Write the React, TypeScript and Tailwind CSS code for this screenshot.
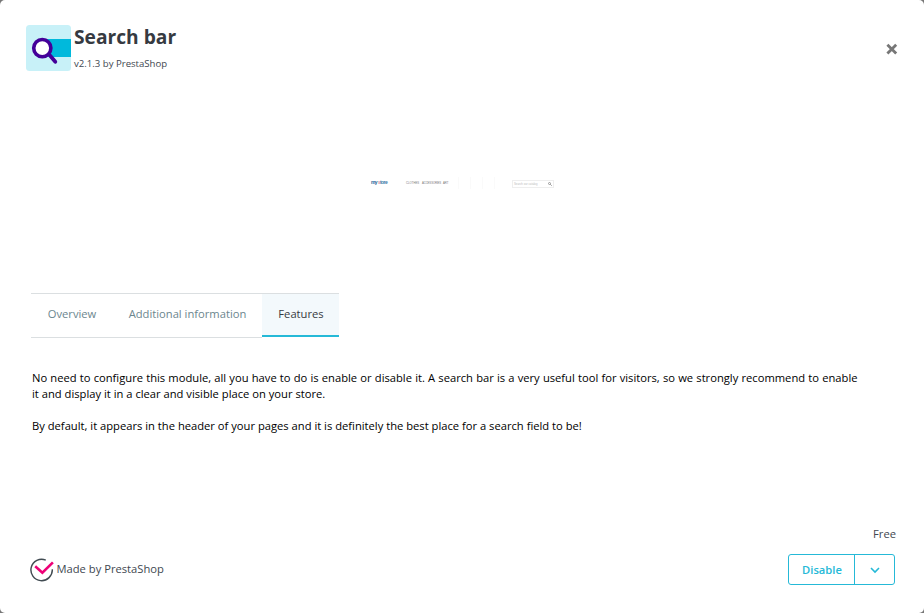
function ModuleIcon() {
  return (
    <svg className="block h-[46px] w-[45px] shrink-0" viewBox="0 0 45 46" fill="none">
      <rect width="45" height="46" rx="3.5" fill="#c8f1f8" />
      <rect x="17" y="14" width="28" height="18" fill="#00b9dc" />
      <path d="M24 30.5L29.3 36.7" stroke="#440099" strokeWidth="3.8" strokeLinecap="round" />
      <circle cx="16.3" cy="23.1" r="8.6" fill="#fff" stroke="#440099" strokeWidth="3.6" />
    </svg>
  );
}

function CloseIcon() {
  return (
    <svg className="block h-3 w-3" viewBox="0 0 12 12">
      <path d="M1.4 1.8L10.2 10.6M10.2 1.8L1.4 10.6" stroke="#777" strokeWidth="2.8" />
    </svg>
  );
}

function StorePreview() {
  return (
    <div className="ml-[371px] flex h-3 w-[185px] items-center font-['Liberation_Sans',sans-serif] text-[2.8px] leading-[4px] text-[#777]">
      <span className="-mt-0.5 w-[35px] text-[5px] leading-[6px] font-bold tracking-[-0.6px] whitespace-nowrap text-[#3979a8]">
        <span className="text-[#24659b]">my </span>
        <span className="text-[#d594a4]">s</span>tore
      </span>
      <span className="-mt-px w-4">CLOTHES</span>
      <span className="-mt-px w-[21px] tracking-[-0.1px]">ACCESSORIES</span>
      <span className="-mt-px w-[15px]">ART</span>
      <span className="flex h-3 w-[54px] gap-[11px]">
        <span className="w-px bg-[#fafafa]" />
        <span className="w-px bg-[#fafafa]" />
        <span className="w-px bg-[#fafafa]" />
        <span className="w-px bg-[#fafafa]" />
      </span>
      <span className="mt-px flex h-[8px] w-[42px] shrink-0 items-center justify-between border border-[#eeeeee] px-px text-[#bbb]">
        <span className="whitespace-nowrap">Search our catalog</span>
        <svg className="h-[4px] w-[4px]" viewBox="0 0 4 4" fill="none" stroke="#888" strokeWidth=".8">
          <circle cx="1.5" cy="1.5" r="1" />
          <path d="M2.2 2.2L3.8 3.8" />
        </svg>
      </span>
    </div>
  );
}

function MadeByIcon() {
  return (
    <svg className="block h-6 w-6 shrink-0" viewBox="0 0 24 24" fill="none">
      <path d="M15.8 2.1A10.7 10.7 0 1 0 22.3 11.3" stroke="#414b52" strokeWidth="1.45" />
      <path d="M5.2 8.3L12.4 14.7L22.9 4.4" stroke="#ee0077" strokeWidth="2.6" />
    </svg>
  );
}

export default function App() {
  return (
    <div className="h-[613px] w-[924px] overflow-hidden bg-[#777] font-['Open_Sans',sans-serif]">
      <main className="flex h-full flex-col rounded-[5px] bg-white text-[#414750]">
        <header className="flex h-[82px] pt-[25px] pl-[26px] pr-[26px]">
          <ModuleIcon />
          <div className="ml-[3px] flex-1">
            <h1 className="h-[26px] text-[19.2px] leading-6 font-bold text-[#363a41]">Search bar</h1>
            <p className="mt-[5px] text-[9.6px] leading-4">v2.1.3 by PrestaShop</p>
          </div>
          <button className="mt-[18px] h-3" aria-label="Close">
            <CloseIcon />
          </button>
        </header>

        <section className="h-[211px] pt-[95px]">
          <StorePreview />
        </section>

        <nav className="ml-[31px] flex h-[45px] w-[308px] items-start border-t border-[#dbdfe1] text-[11.2px] text-[#6c868e]">
          <button className="h-[44px] w-[82px] border-b border-[#dbdfe1] pb-[3px]">Overview</button>
          <button className="h-[44px] w-[149px] border-b border-[#dbdfe1] whitespace-nowrap pb-[3px]">Additional information</button>
          <button className="h-[43px] w-[77px] border-b-2 border-[#25b9d7] bg-[#f3f9fc] pb-px pl-px text-[#363a41]">Features</button>
        </nav>

        <section className="mt-8 ml-8 w-[825.5px] flex-1 text-justify text-[11.2px] leading-4 text-black">
          <p>
            No need to configure this module, all you have to do is enable or disable it. A search bar is a very useful tool for visitors, so we strongly recommend to enable
            it and display it in a clear and visible place on your store.
          </p>
          <p className="mt-4">By default, it appears in the header of your pages and it is definitely the best place for a search field to be!</p>
        </section>

        <footer className="h-[89px] pl-[30px] pr-[29px] text-[11.2px]">
          <p className="-mr-px h-[30px] text-right leading-5">Free</p>
          <div className="flex h-[31px] items-center justify-between">
            <div className="flex items-center gap-[3px]">
              <MadeByIcon />
              <span className="-ml-[0.5px] mb-px">Made by PrestaShop</span>
            </div>
            <div className="flex h-[31px] w-[107px] rounded-[3px] border border-[#25b9d7] text-[#25b9d7]">
              <button className="w-[66px] border-r border-[#25b9d7] pt-px pl-px text-[11.2px] font-semibold">Disable</button>
              <button className="flex flex-1 items-center justify-center" aria-label="More actions">
                <svg className="mt-0.5 h-[7px] w-[10px]" viewBox="0 0 10 7" fill="none">
                  <path d="M1 1L5 5L9 1" stroke="currentColor" strokeWidth="1.6" />
                </svg>
              </button>
            </div>
          </div>
        </footer>
      </main>
    </div>
  );
}
